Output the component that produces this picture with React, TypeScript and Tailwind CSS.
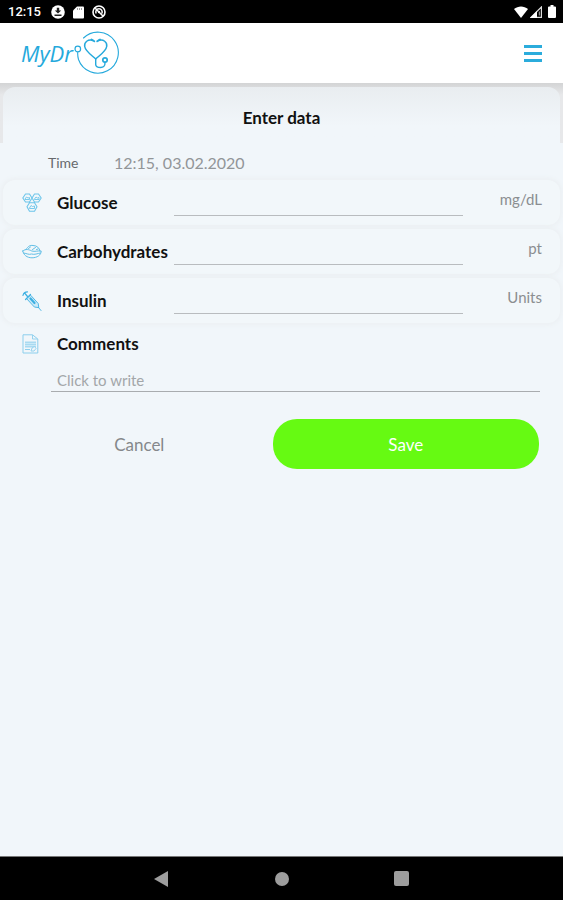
import type { ReactNode } from 'react';

function StatusBar() {
  return (
    <div className="flex h-[23px] items-center justify-between bg-black pl-2 pr-[7px] text-white">
      <div className="flex items-center pt-px">
        <span className="w-[43px] font-[Roboto,sans-serif] text-[13px] font-medium leading-4">12:15</span>
        <svg className="h-[14px] w-[14px]" viewBox="0 0 14 14">
          <circle cx="7" cy="7" r="6.8" fill="#fff" />
          <path d="M5.8 2.8h2.4v2.6h2L7 8.5 3.8 5.4h2zM3.5 9.5h7v1.4h-7z" fill="#222" />
        </svg>
        <svg className="ml-[8px] h-[13px] w-[11px]" viewBox="0 0 11 13">
          <path d="M4 0.5h6a1 1 0 0 1 1 1v10a1 1 0 0 1-1 1H1a1 1 0 0 1-1-1V4.5z" fill="#fff" />
          <path d="M4.500 2v2M6.500 2v2M8.500 2v2" stroke="#888" strokeWidth="0.8" />
        </svg>
        <svg className="ml-[8px] h-[14px] w-[14px]" viewBox="0 0 14 14" fill="none" stroke="#fff">
          <circle cx="7" cy="7" r="6" strokeWidth="1.6" />
          <path d="M4.200 8.500a3.200 3.200 0 1 1 5.600 0M3.200 3.200l8 8" strokeWidth="1.500" />
          <circle cx="7" cy="7" r="1.200" fill="#fff" stroke="none" />
        </svg>
      </div>
      <div className="flex items-center">
        <svg className="h-[12px] w-[14px]" viewBox="0 0 14 12">
          <path d="M0 3C4-.4 10-.4 14 3L7 12z" fill="#fff" />
        </svg>
        <svg className="ml-[2px] h-[12px] w-[12px]" viewBox="0 0 12 12">
          <path d="M11.4 1v10.4H1z" fill="none" stroke="#ddd" strokeWidth="1.2" />
          <path d="M7 5v7H0z" fill="#fff" />
          <path d="M9.300 5.500v4" stroke="#aaa" />
        </svg>
        <svg className="ml-[6px] h-[13px] w-[8px]" viewBox="0 0 8 13">
          <path d="M2.500 0h3v1.400H7a1 1 0 0 1 1 1V12a1 1 0 0 1-1 1H1a1 1 0 0 1-1-1V2.400a1 1 0 0 1 1-1h1.500z" fill="#fff" />
        </svg>
      </div>
    </div>
  );
}

function Logo() {
  return (
    <a href="#" aria-label="MyDr" className="flex items-center text-[#25a9dc]">
      <span className="w-[52px] font-['Open_Sans',sans-serif] text-[22px] font-medium italic leading-6">MyDr</span>
      <svg className="h-11 w-[46px]" viewBox="0 0 46 44" fill="none" stroke="currentColor" strokeLinecap="round">
        <path d="M10.500 7A20.500 20.500 0 1 1 5.500 28.500C4.800 26 4.600 24 4.700 21.500" strokeWidth="1.100" />
        <circle cx="4.800" cy="18" r="2.800" strokeWidth="1.200" />
        <path d="M20 9.500c-5-1.500-9 1.500-8.300 6 .6 4.500 6 8 11 12.500 5-4.500 10.400-8 11-12.500.700-4.500-3.300-7.500-8.300-6" strokeWidth="1.500" />
        <path d="M18.500 8.500l2.800 1.700M27 8.500l-2.800 1.700" strokeWidth="1.900" />
        <path d="M22.700 28v5.500c0 2.500 3 3 5 3s4.600-.8 4.300-5" strokeWidth="1.400" />
        <circle cx="32" cy="29" r="2.200" strokeWidth="1.700" />
      </svg>
    </a>
  );
}

function GlucoseIcon() {
  return (
    <svg className="h-5 w-5 shrink-0" viewBox="0 0 20 20" fill="none" stroke="#6cc5ea" strokeWidth="1.100">
      <path d="M3.500 1h4L10 5 7.500 9h-4L.8 5zM12.500 1h4L19.200 5l-2.700 4h-4L10 5zM7.500 9.800h5l2.500 4-2.500 4.400h-5L5 13.800z" strokeLinejoin="round" />
      <path d="M3 6l1.500-2L6 5l1.500-.5V6.500H3zM12.500 6l1.500-2 1.500 1 1.500-.5v2h-4.500zM7.500 15l1.500-2.500 1.500 1 2-.5v2.500h-5z" strokeWidth="0.9" />
    </svg>
  );
}

function CarbsIcon() {
  return (
    <svg className="h-5 w-5 shrink-0" viewBox="0 0 20 20" fill="none" stroke="#62bfe6" strokeWidth="1" strokeLinecap="round">
      <path d="M4 7.500C6 4.300 8 3 11 3.500c4 0 6.500 2.500 7 5.500" />
      <path d="M.8 9c3-2.500 6-1.500 9 0 3 1 6-.5 9.400 0 0 4-4 6.800-9.200 6.800-5 0-8.500-2.800-9.200-6.800z" />
      <path d="M1.500 11c4 .5 5 2 8 1 3 1 6-.5 9-1M6.500 6.500l2-1.500M10.500 7.500l3-2M14.500 7.500l1.500-.5" />
    </svg>
  );
}

function InsulinIcon() {
  return (
    <svg className="h-5 w-5 shrink-0" viewBox="0 0 20 20" fill="none" stroke="#3db0e2" strokeLinecap="round">
      <path d="M1 4.500C1.500 2 3.500.8 5.500.8M3 2.500l2.500 3M3.500 8.500L8.500 3.500" strokeWidth="1.200" />
      <path d="M5 7.500l3.600-3.300 7.600 8.300.6 4.100-4-.5z" strokeWidth="0.9" strokeLinejoin="round" fill="#cdeaf8" />
      <path d="M8.500 7.500l4 4.500" strokeWidth="2.200" />
      <path d="M16.500 16.500L19 19.500" strokeWidth="0.9" />
    </svg>
  );
}

function CommentsIcon() {
  return (
    <svg className="h-5 w-5 shrink-0" viewBox="0 0 20 20" fill="none" stroke="#8ccfed">
      <path d="M2 .8h9.500L16.800 5v14H2z" strokeWidth="1" strokeLinejoin="round" />
      <path d="M11.500 1v4h5" strokeWidth="0.9" />
      <path d="M4 7.500h11v6H4z" fill="#a9daf1" stroke="none" />
      <path d="M4 9.500h11M4 11.500h11" stroke="#d9eff9" strokeWidth="0.7" />
      <path d="M4 15.500h5" strokeWidth="1" />
      <path d="M10 17l1-3 2.500-1.500 1.500 2-2 2.500z" fill="#f1f6fa" strokeWidth="0.9" />
    </svg>
  );
}

interface MeasureRowProps {
  id: string;
  label: string;
  unit: string;
  icon: ReactNode;
}

function MeasureRow({ id, label, unit, icon }: MeasureRowProps) {
  return (
    <div className="mx-[3px] flex h-[45px] items-center rounded-xl bg-[#f2f7fa] pl-[19px] pr-[18px] shadow-[0_0_4px_2px_#ecf0f3]">
      {icon}
      <label htmlFor={id} className="ml-[15px] w-[117px] shrink-0 text-[17px] font-bold leading-6 text-[#111]">
        {label}
      </label>
      <input id={id} className="h-[26px] min-w-0 flex-1 border-b border-[#b9bcbf] bg-transparent text-[15px] outline-none" />
      <span className="w-[79px] pb-2 text-right text-[15px] leading-5 text-[#8b8e91]">{unit}</span>
    </div>
  );
}

const measures: MeasureRowProps[] = [
  { id: 'glucose', label: 'Glucose', unit: 'mg/dL', icon: <GlucoseIcon /> },
  { id: 'carbohydrates', label: 'Carbohydrates', unit: 'pt', icon: <CarbsIcon /> },
  { id: 'insulin', label: 'Insulin', unit: 'Units', icon: <InsulinIcon /> },
];

function NavBar() {
  return (
    <nav className="flex h-11 items-center justify-center gap-[100px] border-t border-[#777] bg-black">
      <button aria-label="Back" className="flex w-5 justify-center">
        <svg className="h-4 w-4" viewBox="0 0 16 16">
          <path d="M14 0v16L0 8z" fill="#9d9d9d" />
        </svg>
      </button>
      <button aria-label="Home" className="flex w-5 justify-center">
        <span className="h-[14px] w-[14px] rounded-full bg-[#9d9d9d]" />
      </button>
      <button aria-label="Recents" className="flex w-5 justify-center">
        <span className="h-[15px] w-[15px] rounded-xs bg-[#9d9d9d]" />
      </button>
    </nav>
  );
}

export default function App() {
  return (
    <div className="flex min-h-screen flex-col bg-[#f1f6fa] font-[Lato,sans-serif]">
      <StatusBar />
      <header className="flex h-[60px] items-center justify-between bg-white pl-[21px] pr-[21px]">
        <Logo />
        <button aria-label="Menu" className="flex w-[18px] flex-col gap-1">
          <span className="h-[3px] bg-[#2bacdc]" />
          <span className="h-[3px] bg-[#2bacdc]" />
          <span className="h-[3px] bg-[#2bacdc]" />
        </button>
      </header>

      <main className="flex flex-1 flex-col">
        <div className="bg-gradient-to-b from-[#d3d4d5] to-[#e7e8ea] to-20% px-[3px] pt-1">
          <h1 className="flex h-14 items-center justify-center rounded-t-xl bg-gradient-to-b from-[#e9edf0] to-[#f1f6fa] to-70% pt-[6px] text-[17px] font-bold leading-6 text-[#111]">
            Enter data
          </h1>
        </div>

        <form className="flex flex-col" onSubmit={(e) => e.preventDefault()}>
          <div className="flex h-[37px] items-center pl-12 pt-[2px]">
            <span className="w-[66px] text-[14px] leading-5 text-[#66696c]">Time</span>
            <time dateTime="2020-03-02T12:15" className="text-[16px] leading-5 text-[#929598]">
              12:15, 03.02.2020
            </time>
          </div>

          <div className="flex flex-col gap-1">
            {measures.map((m) => (
              <MeasureRow key={m.id} {...m} />
            ))}
          </div>

          <div className="flex h-[42px] items-center pl-[21px]">
            <CommentsIcon />
            <label htmlFor="comments" className="ml-4 text-[17px] font-bold leading-6 text-[#111]">
              Comments
            </label>
          </div>
          <input
            id="comments"
            placeholder="Click to write"
            className="ml-[51px] mr-[23px] h-[27px] border-b border-[#a9acaf] bg-transparent pl-[6px] pt-1 text-[15px] outline-none placeholder:text-[#a3a6a9]"
          />

          <div className="mt-[27px] flex pl-[6px] pr-6">
            <button type="button" className="h-[50px] flex-1 pt-[2px] text-[17px] text-[#85888b]">
              Cancel
            </button>
            <button type="submit" className="h-[50px] flex-1 rounded-3xl bg-[#66fa12] pt-[2px] text-[17px] text-white">
              Save
            </button>
          </div>
        </form>
      </main>

      <NavBar />
    </div>
  );
}
